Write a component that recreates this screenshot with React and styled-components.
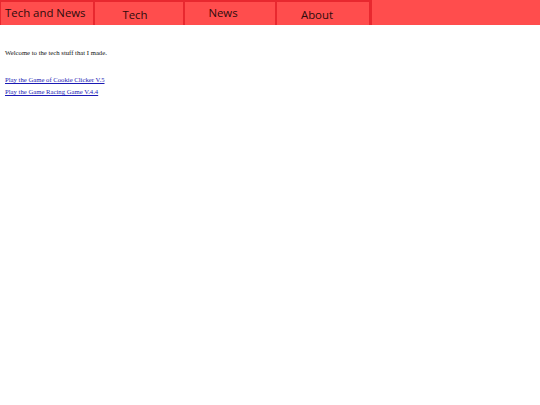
import React from "react"
import styled, { createGlobalStyle } from "styled-components"

const Global = createGlobalStyle`
  html, body { margin: 0; padding: 0; background: #fff; }
`

const Bar = styled.div`
  height: 25px;
  background-color: #ff4d4d;
  display: flex;
`

const Nav = styled.div`
  display: flex;
  border-top: 2px solid #e8282f;
  border-right: 2px solid #e8282f;
  box-sizing: border-box;
  height: 25px;
`

const Item = styled.div`
  width: ${p => p.w}px;
  box-sizing: border-box;
  border-left: 1px solid #e8282f;
  border-right: 1px solid #e8282f;
  font-family: "Open Sans", "Noto Sans", sans-serif;
  font-size: 11.4px;
  color: #2e0c0c;
  display: flex;
  justify-content: ${p => (p.left ? "flex-start" : "center")};
  padding: ${p => (p.left ? "0 0 0 4px" : `0 ${p.shift}px 0 0`)};
  padding-top: ${p => p.top}px;
  line-height: 16px;
`

const Page = styled.div`
  padding: 21px 5px;
  font-family: "Liberation Serif", "Times New Roman", serif;
  font-size: 6.7px;
  color: #111;
`

const Text = styled.p`
  margin: 3px 0 18px;
`

const Link = styled.a`
  display: block;
  color: #1a1ab4;
  text-decoration: underline;
  line-height: 12px;
`

export default function App() {
  return (
    <>
      <Global />
      <Bar>
        <Nav>
          <Item w={94} left top={3}>Tech and News</Item>
          <Item w={90} shift={8} top={5}>Tech</Item>
          <Item w={92} shift={14} top={3}>News</Item>
          <Item w={94} shift={12} top={5}>About</Item>
        </Nav>
      </Bar>
      <Page>
        <Text>Welcome to the tech stuff that I made.</Text>
        <Link href="#">Play the Game of Cookie Clicker V.5</Link>
        <Link href="#">Play the Game Racing Game V.4.4</Link>
      </Page>
    </>
  )
}
